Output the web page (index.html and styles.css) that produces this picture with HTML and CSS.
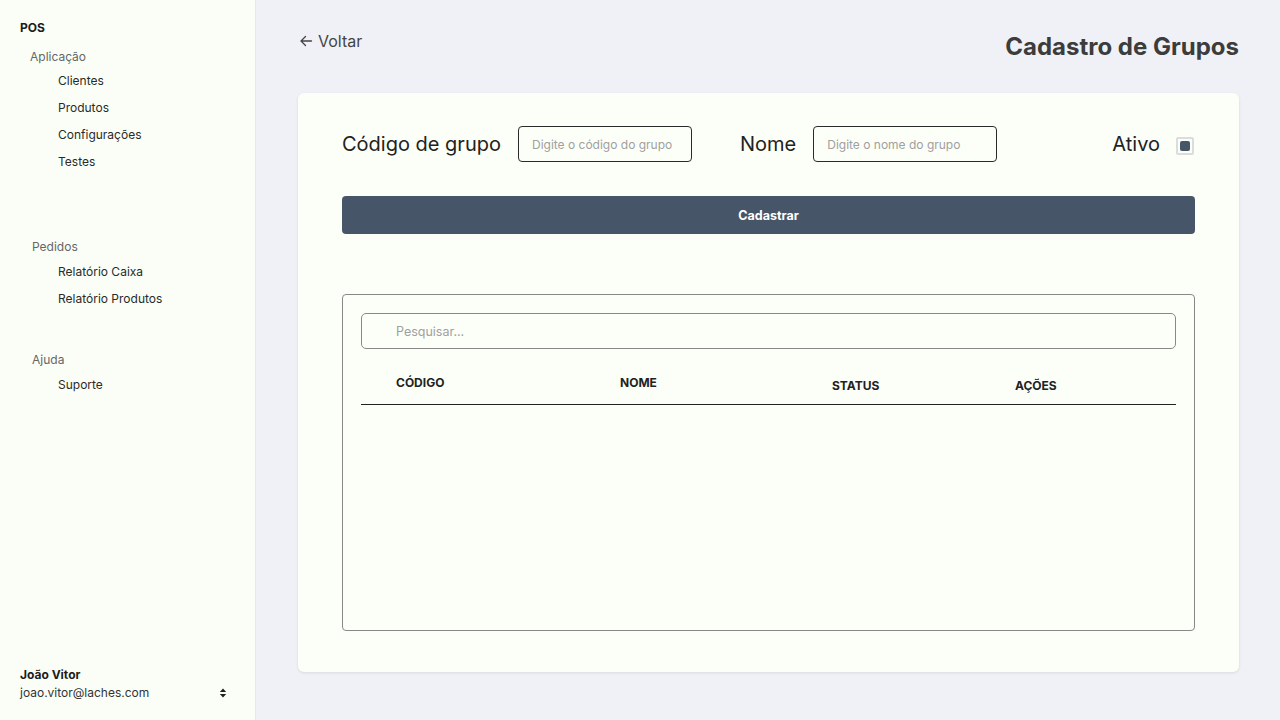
FILE: index.html
```html
<!DOCTYPE html>
<html lang="pt">
<head>
<meta charset="utf-8">
<title>Cadastro de Grupos</title>
<link rel="stylesheet" href="styles.css">
</head>
<body>
<aside class="sidebar">
  <div class="brand">POS</div>
  <nav class="nav">
    <div class="group g1">
      <div class="group-title first">Aplicação</div>
      <a class="item">Clientes</a>
      <a class="item">Produtos</a>
      <a class="item">Configurações</a>
      <a class="item">Testes</a>
    </div>
    <div class="group g2">
      <div class="group-title">Pedidos</div>
      <a class="item">Relatório Caixa</a>
      <a class="item">Relatório Produtos</a>
    </div>
    <div class="group">
      <div class="group-title">Ajuda</div>
      <a class="item">Suporte</a>
    </div>
  </nav>
  <div class="user">
    <div class="user-info">
      <div class="user-name">João Vitor</div>
      <div class="user-mail">joao.vitor@laches.com</div>
    </div>
    <svg class="updown" width="8" height="10" viewBox="0 0 8 10"><path d="M4 0.5 L7.2 4 H0.8 Z M4 9.5 L7.2 6 H0.8 Z" fill="#222"/></svg>
  </div>
</aside>
<main class="main">
  <header class="topbar">
    <a class="back">
      <svg width="14" height="14" viewBox="0 0 14 14"><path d="M12.5 7 H2 M6.5 2.5 L2 7 L6.5 11.5" fill="none" stroke="#444" stroke-width="1.3" stroke-linecap="round" stroke-linejoin="round"/></svg>
      <span>Voltar</span>
    </a>
    <h1 class="title">Cadastro de Grupos</h1>
  </header>
  <section class="card">
    <div class="form-row">
      <label class="label">Código de grupo</label>
      <input class="field code" type="text" placeholder="Digite o código do grupo">
      <label class="label nome-label">Nome</label>
      <input class="field nome" type="text" placeholder="Digite o nome do grupo">
      <label class="label ativo-label">Ativo</label>
      <span class="check"><span class="check-inner"></span></span>
    </div>
    <button class="btn">Cadastrar</button>
    <div class="table-box">
      <input class="search" type="text" placeholder="Pesquisar...">
      <div class="thead">
        <div class="th">CÓDIGO</div>
        <div class="th">NOME</div>
        <div class="th low">STATUS</div>
        <div class="th low">AÇÕES</div>
      </div>
    </div>
  </section>
</main>
</body>
</html>
```
FILE: styles.css
```css
* { box-sizing: border-box; }
html, body { margin: 0; height: 100%; }
body {
  display: flex;
  font-family: Inter, "Noto Sans", sans-serif;
  color: #222;
  background: #f0f1f6;
  width: 1280px;
  height: 720px;
  overflow: hidden;
}
.sidebar {
  width: 256px;
  flex: none;
  background: #fbfef7;
  border-right: 1px solid #e6e8e9;
  display: flex;
  flex-direction: column;
  padding: 20px 0 19px 20px;
}
.brand { font-size: 12px; font-weight: 700; line-height: 16px; color: #1c1c1c; }
.nav { display: flex; flex-direction: column; }
.group { display: flex; flex-direction: column; }
.group.g1 { margin-bottom: 69px; }
.group.g2 { margin-bottom: 45px; }
.group-title {
  font-size: 12px; color: #666; line-height: 16px;
  padding-left: 12px; margin-top: 0; margin-bottom: 9px;
}
.group-title.first { padding-left: 10px; margin-top: 13px; margin-bottom: 8px; }
.item {
  font-size: 12px; color: #2a2a2a; line-height: 16px;
  padding-left: 38px; margin-bottom: 11px;
}
.group .item:last-child { margin-bottom: 0; }
.user {
  margin-top: auto;
  display: flex; align-items: flex-end; justify-content: space-between;
  padding-right: 28px;
}
.user-name { font-size: 12px; font-weight: 700; line-height: 16px; color: #1c1c1c; margin-bottom: 2px; }
.user-mail { font-size: 12px; color: #333; line-height: 16px; }
.updown { margin-bottom: 3px; }

.main {
  flex: 1;
  padding: 30px 41px 0 42px;
  display: flex; flex-direction: column;
}
.topbar { display: flex; justify-content: space-between; align-items: flex-start; height: 63px; }
.back {
  display: flex; align-items: center; gap: 5px;
  font-size: 16px; color: #444; line-height: 22px; padding-left: 1px;
}
.title {
  margin: 2px 0 0; font-size: 24px; font-weight: 700; color: #3c3c3c; line-height: 29px;
}
.card {
  background: #fcfff8;
  border-radius: 6px;
  box-shadow: 0 1px 3px rgba(0,0,0,0.1);
  height: 579px;
  padding: 33px 44px 41px 44px;
  display: flex; flex-direction: column;
}
.form-row { display: flex; align-items: center; height: 36px; }
.label { font-size: 20px; color: #222; line-height: 24px; }
.field {
  height: 36px; border: 1px solid #2a2a2a; border-radius: 4px;
  background: transparent; padding: 0 13px; font-family: inherit; font-size: 12px; color: #222;
  outline: none;
}
.field::placeholder, .search::placeholder { color: #a0a0a0; }
.code { width: 174px; margin-left: 17px; }
.nome-label { margin-left: 48px; }
.nome { width: 184px; margin-left: 17px; }
.ativo-label { margin-left: auto; margin-right: 16px; }
.check {
  width: 18px; height: 18px; border: 2px solid #dcdcdc; border-radius: 2px;
  display: flex; align-items: center; justify-content: center; margin-right: 1px; margin-top: 3px;
}
.check-inner { width: 10px; height: 10px; background: #475569; border-radius: 2px; }
.btn {
  margin-top: 34px; height: 38px; border: none; border-radius: 4px;
  background: #475569; color: #fff; font-family: inherit; font-weight: 700; font-size: 12.5px;
}
.table-box {
  margin-top: 60px; flex: 1;
  border: 1px solid #888; border-radius: 4px;
  padding: 18px 18px 0 18px;
  display: flex; flex-direction: column;
}
.search {
  height: 36px; border: 1px solid #888; border-radius: 5px; background: transparent;
  padding: 0 34px; font-family: inherit; font-size: 12.5px; outline: none;
}
.thead {
  display: grid; grid-template-columns: 224px 212px 183px 1fr;
  padding: 26px 0 0 35px; height: 56px;
  border-bottom: 1px solid #222;
}
.th { font-size: 12px; font-weight: 700; color: #222; line-height: 16px; }
.th.low { padding-top: 3px; }
```
